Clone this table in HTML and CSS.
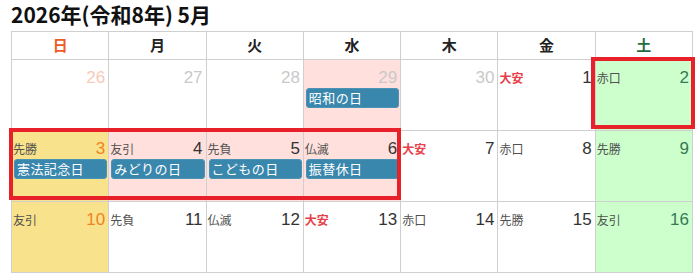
FILE: index.html
```html
<!DOCTYPE html>
<html lang="ja">
<head>
<meta charset="utf-8">
<link rel="stylesheet" href="styles.css">
</head>
<body>
<div class="page">
  <h1 class="title">2026年(令和8年) 5月</h1>
  <div class="cal-wrap">
    <div class="cal">
      <div class="hd sun">日</div>
      <div class="hd">月</div>
      <div class="hd">火</div>
      <div class="hd">水</div>
      <div class="hd">木</div>
      <div class="hd">金</div>
      <div class="hd sat">土</div>

      <div class="cell other sunnum"><div class="top"><span class="rk"></span><span class="num">26</span></div></div>
      <div class="cell other"><div class="top"><span class="rk"></span><span class="num">27</span></div></div>
      <div class="cell other"><div class="top"><span class="rk"></span><span class="num">28</span></div></div>
      <div class="cell other hol"><div class="top"><span class="rk"></span><span class="num">29</span></div><div class="ev">昭和の日</div></div>
      <div class="cell other"><div class="top"><span class="rk"></span><span class="num">30</span></div></div>
      <div class="cell"><div class="top"><span class="rk taian">大安</span><span class="num">1</span></div></div>
      <div class="cell satbg"><div class="top"><span class="rk">赤口</span><span class="num">2</span></div></div>

      <div class="cell sunbg"><div class="top"><span class="rk">先勝</span><span class="num">3</span></div><div class="ev">憲法記念日</div></div>
      <div class="cell hol"><div class="top"><span class="rk">友引</span><span class="num">4</span></div><div class="ev">みどりの日</div></div>
      <div class="cell hol"><div class="top"><span class="rk">先負</span><span class="num">5</span></div><div class="ev">こどもの日</div></div>
      <div class="cell hol"><div class="top"><span class="rk">仏滅</span><span class="num">6</span></div><div class="ev">振替休日</div></div>
      <div class="cell"><div class="top"><span class="rk taian">大安</span><span class="num">7</span></div></div>
      <div class="cell"><div class="top"><span class="rk">赤口</span><span class="num">8</span></div></div>
      <div class="cell satbg"><div class="top"><span class="rk">先勝</span><span class="num">9</span></div></div>

      <div class="cell sunbg"><div class="top"><span class="rk">友引</span><span class="num">10</span></div></div>
      <div class="cell"><div class="top"><span class="rk">先負</span><span class="num">11</span></div></div>
      <div class="cell"><div class="top"><span class="rk">仏滅</span><span class="num">12</span></div></div>
      <div class="cell"><div class="top"><span class="rk taian">大安</span><span class="num">13</span></div></div>
      <div class="cell"><div class="top"><span class="rk">赤口</span><span class="num">14</span></div></div>
      <div class="cell"><div class="top"><span class="rk">先勝</span><span class="num">15</span></div></div>
      <div class="cell satbg"><div class="top"><span class="rk">友引</span><span class="num">16</span></div></div>
    </div>
    <div class="mark mark-sat"></div>
    <div class="mark mark-week"></div>
  </div>
</div>
</body>
</html>
```
FILE: styles.css
```css
* { box-sizing: border-box; }
html, body { margin: 0; padding: 0; background: #fff; }
body {
  font-family: "Noto Sans CJK JP", "Noto Sans", sans-serif;
  color: #222;
  width: 700px;
  height: 280px;
  overflow: hidden;
}
.page { padding: 0 0 0 11px; }
.title {
  margin: 0;
  height: 31px;
  font-size: 21px;
  line-height: 28px;
  font-weight: bold;
  color: #111;
}
.cal-wrap { position: relative; width: 682px; }
.cal {
  display: grid;
  grid-template-columns: repeat(7, 1fr);
  grid-template-rows: 28px 71px 71px 71px;
  border-left: 1px solid #cfcfcf;
  border-top: 1px solid #cfcfcf;
}
.hd {
  border-right: 1px solid #cfcfcf;
  border-bottom: 1px solid #cfcfcf;
  text-align: center;
  font-size: 15px;
  font-weight: bold;
  line-height: 26px;
  color: #222;
}
.hd.sun { color: #ee5a24; }
.hd.sat { color: #1e6e40; }
.cell {
  border-right: 1px solid #cfcfcf;
  border-bottom: 1px solid #cfcfcf;
  padding-top: 8px;
  background: #fff;
}
.top {
  display: flex;
  justify-content: space-between;
  align-items: baseline;
  padding: 0 3px 0 1px;
  height: 20px;
}
.rk {
  font-size: 12px;
  color: #505050;
  line-height: 16px;
}
.rk.taian { color: #e8404a; font-weight: bold; }
.num {
  font-family: "Liberation Sans", Arial, sans-serif;
  font-size: 17px;
  line-height: 20px;
  color: #333;
}
.other .num { color: #c9c9c9; }
.other.sunnum .num { color: #f7c9b8; }
.hol { background: #ffe0dc; }
.sunbg { background: #f8e28b; }
.sunbg .num { color: #f08324; }
.satbg { background: #ccffcc; }
.satbg .num { color: #357a55; }
.ev {
  margin: 0 1px 0 2px;
  height: 20px;
  background: #3a87ad;
  border: 1px solid #4b93b4;
  border-radius: 3px;
  color: #fff;
  font-size: 13px;
  line-height: 18px;
  padding-left: 2px;
  letter-spacing: 0.4px;
  white-space: nowrap;
  overflow: hidden;
}
.mark {
  position: absolute;
  border: 4px solid #e8202a;
}
.mark-sat { left: 580px; top: 26px; width: 104px; height: 72px; }
.mark-week { left: -2px; top: 97px; width: 392px; height: 72px; }
```
